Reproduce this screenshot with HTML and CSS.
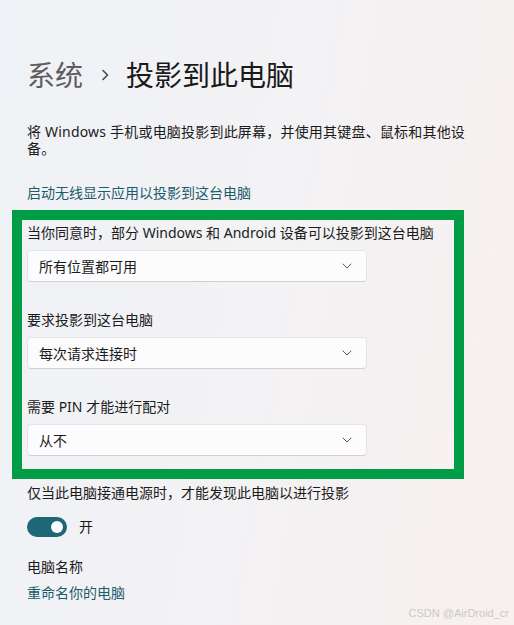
FILE: index.html
```html
<!DOCTYPE html>
<html lang="zh-CN">
<head>
<meta charset="utf-8">
<title>投影到此电脑</title>
<link rel="stylesheet" href="styles.css">
</head>
<body>
<main class="page">
  <h1 class="title"><span class="crumb">系统</span><span class="sep"><svg width="8" height="12" viewBox="0 0 8 12"><path d="M2 1.5l4.5 4.5-4.5 4.5" fill="none" stroke="#4a4a4a" stroke-width="1.6" stroke-linecap="round" stroke-linejoin="round"/></svg></span><span class="current">投影到此电脑</span></h1>
  <p class="desc">将 Windows 手机或电脑投影到此屏幕，并使用其键盘、鼠标和其他设备。</p>
  <a class="link link-top" href="#">启动无线显示应用以投影到这台电脑</a>
  <section class="highlight">
    <div class="group">
      <div class="label">当你同意时，部分 Windows 和 Android 设备可以投影到这台电脑</div>
      <div class="select"><span>所有位置都可用</span><svg class="chev" width="10" height="6" viewBox="0 0 10 6"><path d="M1 1l4 4 4-4" fill="none" stroke="#555" stroke-width="1" stroke-linecap="round" stroke-linejoin="round"/></svg></div>
    </div>
    <div class="group">
      <div class="label">要求投影到这台电脑</div>
      <div class="select"><span>每次请求连接时</span><svg class="chev" width="10" height="6" viewBox="0 0 10 6"><path d="M1 1l4 4 4-4" fill="none" stroke="#555" stroke-width="1" stroke-linecap="round" stroke-linejoin="round"/></svg></div>
    </div>
    <div class="group">
      <div class="label">需要 PIN 才能进行配对</div>
      <div class="select"><span>从不</span><svg class="chev" width="10" height="6" viewBox="0 0 10 6"><path d="M1 1l4 4 4-4" fill="none" stroke="#555" stroke-width="1" stroke-linecap="round" stroke-linejoin="round"/></svg></div>
    </div>
  </section>
  <div class="label power">仅当此电脑接通电源时，才能发现此电脑以进行投影</div>
  <div class="toggle-row"><span class="toggle"><span class="knob"></span></span><span class="toggle-text">开</span></div>
  <div class="label name">电脑名称</div>
  <a class="link rename" href="#">重命名你的电脑</a>
</main>
<div class="watermark">CSDN @AirDroid_cr</div>
</body>
</html>
```

FILE: styles.css
```css
html, body {
  margin: 0;
  padding: 0;
}
body {
  width: 514px;
  height: 625px;
  overflow: hidden;
  position: relative;
  background: linear-gradient(100deg, #eff2f6 0%, #f3f2f4 50%, #f8f0ef 100%);
  font-family: "Noto Sans", "Noto Sans CJK SC", sans-serif;
  color: #1b1b1b;
  font-size: 14px;
}
.page {
  padding: 57px 0 0 27px;
  display: flex;
  flex-direction: column;
  align-items: flex-start;
}
.title {
  margin: 0;
  font-size: 28px;
  font-weight: 400;
  line-height: 36px;
  display: flex;
  align-items: center;
}
.crumb {
  color: #5d5d5d;
}
.sep {
  width: 43px;
  display: flex;
  justify-content: center;
  align-items: center;
}
.sep svg {
  display: block;
}
.current {
  color: #1a1a1a;
}
.desc {
  margin: 30px 0 0 0;
  width: 440px;
  line-height: 17px;
  font-size: 14px;
  letter-spacing: 0.2px;
}
.link {
  color: #1b5b6d;
  text-decoration: none;
  line-height: 20px;
}
.link-top {
  margin-top: 26px;
}
.highlight {
  margin: 7px 0 0 -15px;
  width: 427px;
  border: 10px solid #009c46;
  padding: 3px 0 13px 5px;
  box-sizing: content-box;
  display: flex;
  flex-direction: column;
  gap: 28px;
}
.group {
  display: flex;
  flex-direction: column;
}
.label {
  line-height: 20px;
}
.group .label {
  margin-bottom: 7px;
}
.select {
  width: 340px;
  height: 32px;
  box-sizing: border-box;
  background: rgba(255, 255, 255, 0.75);
  border: 1px solid #e6e4e4;
  border-bottom-color: #d2d0d0;
  border-radius: 4px;
  display: flex;
  align-items: center;
  justify-content: space-between;
  padding: 0 14px 0 11px;
}
.chev {
  display: block;
}
.power {
  margin-top: 4px;
}
.toggle-row {
  margin-top: 14px;
  display: flex;
  align-items: center;
  gap: 12px;
  height: 20px;
}
.toggle {
  width: 40px;
  height: 20px;
  border-radius: 10px;
  background: #1d6777;
  display: flex;
  align-items: center;
  justify-content: flex-end;
  padding-right: 4px;
  box-sizing: border-box;
}
.knob {
  width: 12px;
  height: 12px;
  border-radius: 50%;
  background: #ffffff;
}
.toggle-text {
  line-height: 20px;
}
.name {
  margin-top: 20px;
}
.rename {
  margin-top: 6px;
}
.watermark {
  position: absolute;
  right: 5px;
  bottom: 6px;
  font-family: "Liberation Sans", Arial, sans-serif;
  font-size: 11px;
  color: #c9c9c9;
}
```
